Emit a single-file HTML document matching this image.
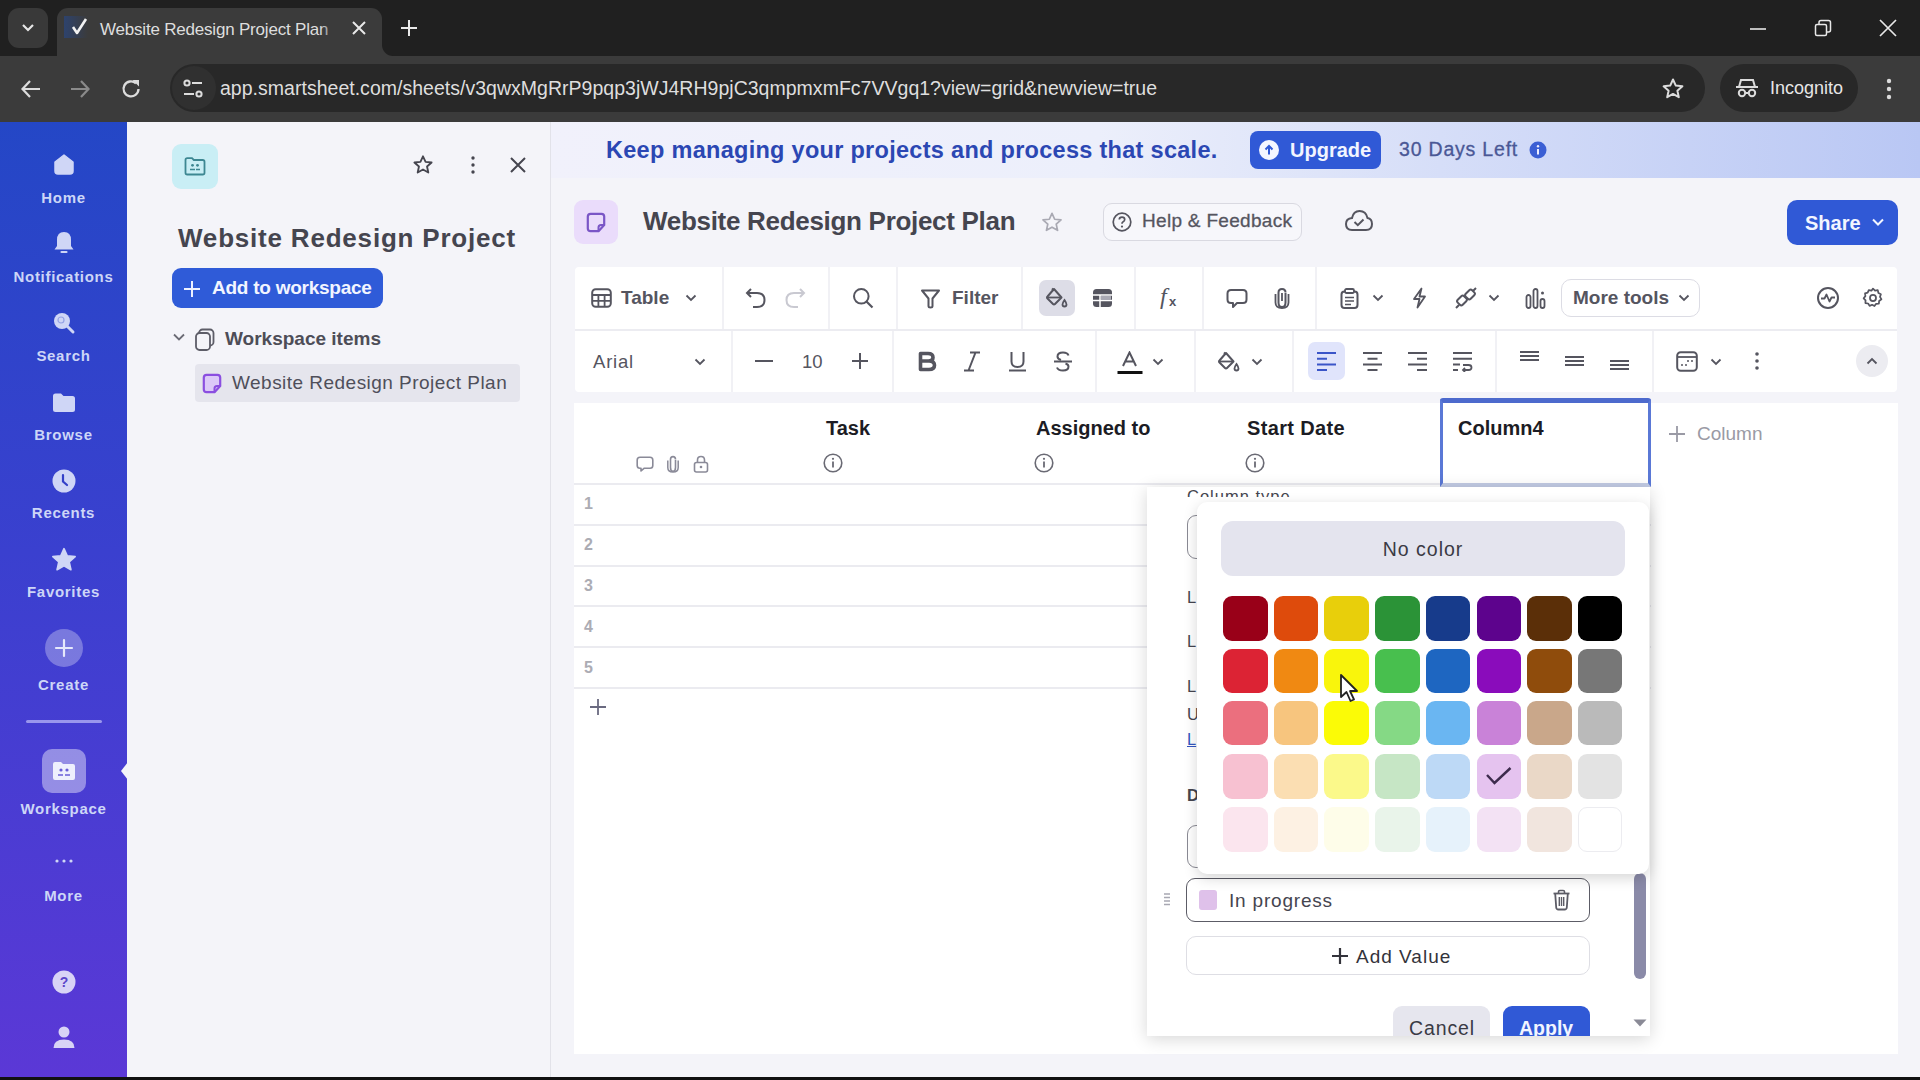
<!DOCTYPE html>
<html><head><meta charset="utf-8">
<style>
*{box-sizing:border-box;margin:0;padding:0}
html,body{width:1920px;height:1080px;overflow:hidden;font-family:"Liberation Sans",sans-serif;background:#f4f4f9}
.abs{position:absolute}
svg{display:block}
/* chrome */
#tabbar{position:absolute;left:0;top:0;width:1920px;height:56px;background:#202020}
#toolbar{position:absolute;left:0;top:56px;width:1920px;height:66px;background:#3b3b3b}
#sidebar{position:absolute;left:0;top:122px;width:127px;height:955px;background:linear-gradient(180deg,#2447c6 0%,#3a40cf 45%,#5b38d6 100%)}
#bottomline{position:absolute;left:0;top:1077px;width:1920px;height:3px;background:#111}
#lpanel{position:absolute;left:127px;top:122px;width:423px;height:955px;background:#f4f4f9}
#main{position:absolute;left:550px;top:122px;width:1370px;height:954px;background:#f4f4f9}
.sb-item{position:absolute;left:0;width:127px;text-align:center;color:#cdd6f7;font-weight:bold;font-size:15px;letter-spacing:0.7px}
</style></head>
<body>

<div id="tabbar">
  <div class="abs" style="left:8px;top:8px;width:40px;height:40px;border-radius:11px;background:#393939"></div>
  <svg class="abs" style="left:19px;top:20px" width="18" height="16" viewBox="0 0 18 16"><path d="M4 5 L9 10 L14 5" stroke="#e6e6e6" stroke-width="2.2" fill="none"/></svg>
  <div class="abs" style="left:57px;top:8px;width:325px;height:48px;border-radius:11px 11px 0 0;background:#3b3b3b"></div>
  <div class="abs" style="left:382px;top:44px;width:10px;height:12px;background:#3b3b3b"></div>
  <div class="abs" style="left:382px;top:34px;width:20px;height:22px;border-radius:0 0 0 11px;background:#202020"></div>
  <div class="abs" style="left:64px;top:16px;width:24px;height:22px;background:linear-gradient(90deg,rgba(40,70,130,0.7),rgba(59,59,59,0))"></div>
  <svg class="abs" style="left:70px;top:17px" width="20" height="20" viewBox="0 0 20 20"><path d="M3 10 L7 16 L16 2" stroke="#f2f2f2" stroke-width="2.6" fill="none" stroke-linejoin="round"/></svg>
  <div class="abs" style="left:100px;top:19.5px;font-size:17px;color:#dedede;white-space:nowrap;letter-spacing:-0.2px">Website Redesign Project Plan</div>
  <div class="abs" style="left:320px;top:14px;width:20px;height:30px;background:linear-gradient(90deg,rgba(59,59,59,0),#3b3b3b)"></div>
  <svg class="abs" style="left:351px;top:20px" width="16" height="16" viewBox="0 0 16 16"><path d="M2 2 L14 14 M14 2 L2 14" stroke="#e8e8e8" stroke-width="2"/></svg>
  <svg class="abs" style="left:400px;top:19px" width="18" height="18" viewBox="0 0 18 18"><path d="M9 1 V17 M1 9 H17" stroke="#e8e8e8" stroke-width="2"/></svg>
  <svg class="abs" style="left:1749px;top:27px" width="18" height="4" viewBox="0 0 18 4"><path d="M1 2 H17" stroke="#e8e8e8" stroke-width="1.6"/></svg>
  <svg class="abs" style="left:1814px;top:19px" width="18" height="18" viewBox="0 0 18 18"><rect x="1.5" y="5.5" width="11" height="11" rx="1.5" stroke="#e8e8e8" stroke-width="1.5" fill="none"/><path d="M5 5.5 V3.5 Q5 1.5 7 1.5 H14.5 Q16.5 1.5 16.5 3.5 V11 Q16.5 13 14.5 13 H12.5" stroke="#e8e8e8" stroke-width="1.5" fill="none"/></svg>
  <svg class="abs" style="left:1878px;top:18px" width="20" height="20" viewBox="0 0 20 20"><path d="M2 2 L18 18 M18 2 L2 18" stroke="#e8e8e8" stroke-width="1.7"/></svg>
</div>
<div id="toolbar">
  <svg class="abs" style="left:20px;top:22px" width="22" height="22" viewBox="0 0 22 22"><path d="M20 11 H3 M10 3 L2.5 11 L10 19" stroke="#dcdcdc" stroke-width="2.2" fill="none"/></svg>
  <svg class="abs" style="left:69px;top:22px" width="22" height="22" viewBox="0 0 22 22"><path d="M2 11 H19 M12 3 L19.5 11 L12 19" stroke="#8a8a8a" stroke-width="2.2" fill="none"/></svg>
  <svg class="abs" style="left:120px;top:22px" width="22" height="22" viewBox="0 0 22 22"><path d="M18.5 11 A7.5 7.5 0 1 1 16 5.3" stroke="#dcdcdc" stroke-width="2.3" fill="none"/><path d="M12.5 2 H19 V8.5 Z" fill="#dcdcdc"/></svg>
  <div class="abs" style="left:170px;top:8px;width:1535px;height:48px;border-radius:24px;background:#282828"></div>
  <div class="abs" style="left:172px;top:10px;width:44px;height:44px;border-radius:22px;background:#303030"></div>
  <svg class="abs" style="left:182px;top:22px" width="22" height="22" viewBox="0 0 22 22"><circle cx="5" cy="5" r="2.6" stroke="#dcdcdc" stroke-width="2" fill="none"/><path d="M10 5 H20 M2 16 H12" stroke="#dcdcdc" stroke-width="2"/><circle cx="17" cy="16" r="2.6" stroke="#dcdcdc" stroke-width="2" fill="none"/></svg>
  <div class="abs" style="left:220px;top:21px;font-size:19.5px;color:#dedede;white-space:nowrap;letter-spacing:0.02px">app.smartsheet.com/sheets/v3qwxMgRrP9pqp3jWJ4RH9pjC3qmpmxmFc7VVgq1?view=grid&amp;newview=true</div>
  <svg class="abs" style="left:1661px;top:21px" width="24" height="24" viewBox="0 0 24 24"><path d="M12 2.5 L14.8 8.6 L21.4 9.3 L16.4 13.7 L17.8 20.2 L12 16.9 L6.2 20.2 L7.6 13.7 L2.6 9.3 L9.2 8.6 Z" stroke="#dcdcdc" stroke-width="2" fill="none" stroke-linejoin="round"/></svg>
  <div class="abs" style="left:1720px;top:8px;width:138px;height:48px;border-radius:24px;background:#282828"></div>
  <svg class="abs" style="left:1735px;top:21px" width="24" height="22" viewBox="0 0 24 22"><path d="M6 3 H18 L20 10 H4 Z" stroke="#dcdcdc" stroke-width="2" fill="none"/><path d="M1 10 H23" stroke="#dcdcdc" stroke-width="2"/><circle cx="7" cy="16" r="3.2" stroke="#dcdcdc" stroke-width="2" fill="none"/><circle cx="17" cy="16" r="3.2" stroke="#dcdcdc" stroke-width="2" fill="none"/><path d="M10 16 H14" stroke="#dcdcdc" stroke-width="2"/></svg>
  <div class="abs" style="left:1770px;top:22px;font-size:18px;color:#e6e6e6">Incognito</div>
  <svg class="abs" style="left:1885px;top:21px" width="8" height="24" viewBox="0 0 8 24"><circle cx="4" cy="4" r="2.2" fill="#dcdcdc"/><circle cx="4" cy="12" r="2.2" fill="#dcdcdc"/><circle cx="4" cy="20" r="2.2" fill="#dcdcdc"/></svg>
</div>


<div id="sidebar">
  <svg class="abs" style="left:53px;top:31px" width="22" height="22" viewBox="0 0 22 22"><path d="M2 9 L11 2 L20 9 V18 Q20 21 17 21 H5 Q2 21 2 18 Z" fill="#cfd6f6" stroke="#cfd6f6" stroke-width="1.5" stroke-linejoin="round"/></svg>
  <div class="sb-item" style="top:67px">Home</div>
  <svg class="abs" style="left:52px;top:108px" width="24" height="26" viewBox="0 0 24 26"><path d="M12 2 Q5 2 5 10 V16 L2.5 19.5 H21.5 L19 16 V10 Q19 2 12 2 Z" fill="#cfd6f6"/><path d="M9.5 22 H14.5" stroke="#cfd6f6" stroke-width="2.2" stroke-linecap="round"/></svg>
  <div class="sb-item" style="top:146px">Notifications</div>
  <svg class="abs" style="left:52px;top:189px" width="24" height="24" viewBox="0 0 24 24"><circle cx="10" cy="10" r="8" fill="#cfd6f6"/><path d="M15 15 L21 21" stroke="#cfd6f6" stroke-width="3" stroke-linecap="round"/><circle cx="9" cy="9" r="3" fill="none" stroke="#2a45c6" stroke-opacity="0.35" stroke-width="1.2"/></svg>
  <div class="sb-item" style="top:225px">Search</div>
  <svg class="abs" style="left:52px;top:270px" width="24" height="22" viewBox="0 0 24 22"><path d="M1 4 Q1 1.5 3.5 1.5 H9 L11.5 4 H20.5 Q23 4 23 6.5 V17.5 Q23 20 20.5 20 H3.5 Q1 20 1 17.5 Z" fill="#cfd6f6"/></svg>
  <div class="sb-item" style="top:304px">Browse</div>
  <svg class="abs" style="left:52px;top:347px" width="24" height="24" viewBox="0 0 24 24"><circle cx="12" cy="12" r="11.5" fill="#cfd6f6"/><path d="M11 6 V12.5 L15 16" stroke="#3340c8" stroke-width="2.2" fill="none" stroke-linecap="round"/></svg>
  <div class="sb-item" style="top:382px">Recents</div>
  <svg class="abs" style="left:51px;top:425px" width="26" height="26" viewBox="0 0 24 24"><path d="M12 1.5 L15 8.2 L22.3 8.9 L16.8 13.8 L18.4 21 L12 17.3 L5.6 21 L7.2 13.8 L1.7 8.9 L9 8.2 Z" fill="#cfd6f6" stroke="#cfd6f6" stroke-width="1.5" stroke-linejoin="round"/></svg>
  <div class="sb-item" style="top:461px">Favorites</div>
  <div class="abs" style="left:45px;top:507px;width:38px;height:38px;border-radius:19px;background:rgba(255,255,255,0.3)"></div>
  <svg class="abs" style="left:54px;top:516px" width="20" height="20" viewBox="0 0 20 20"><path d="M10 2 V18 M2 10 H18" stroke="#e6e8fb" stroke-width="2.2" stroke-linecap="round"/></svg>
  <div class="sb-item" style="top:554px">Create</div>
  <div class="abs" style="left:26px;top:598px;width:76px;height:3px;border-radius:2px;background:rgba(210,210,255,0.6)"></div>
  <div class="abs" style="left:42px;top:627px;width:44px;height:44px;border-radius:10px;background:rgba(255,255,255,0.42)"></div>
  <svg class="abs" style="left:52px;top:639px" width="24" height="20" viewBox="0 0 24 20"><path d="M1 3 Q1 1 3 1 H9 L11 3 H21 Q23 3 23 5 V17 Q23 19 21 19 H3 Q1 19 1 17 Z" fill="#eef0fd"/><circle cx="9" cy="9" r="1.6" fill="#6a5ed8"/><circle cx="15" cy="9" r="1.6" fill="#6a5ed8"/><path d="M6 14 H11 M13 14 H18" stroke="#6a5ed8" stroke-width="1.6"/></svg>
  <div class="sb-item" style="top:678px">Workspace</div>
  <svg class="abs" style="left:120px;top:640px" width="8" height="18" viewBox="0 0 8 18"><path d="M8 0 L1 9 L8 18 Z" fill="#f4f4f9"/></svg>
  <svg class="abs" style="left:54px;top:736px" width="20" height="6" viewBox="0 0 20 6"><circle cx="3" cy="3" r="1.6" fill="#cfd6f6"/><circle cx="10" cy="3" r="1.6" fill="#cfd6f6"/><circle cx="17" cy="3" r="1.6" fill="#cfd6f6"/></svg>
  <div class="sb-item" style="top:765px">More</div>
  <svg class="abs" style="left:52px;top:848px" width="24" height="24" viewBox="0 0 24 24"><circle cx="12" cy="12" r="11.5" fill="#d8d3f6"/><text x="12" y="17" text-anchor="middle" font-family="Liberation Sans" font-weight="bold" font-size="14" fill="#5b45c9">?</text></svg>
  <svg class="abs" style="left:52px;top:903px" width="24" height="26" viewBox="0 0 24 26"><circle cx="12" cy="7" r="5.5" fill="#d8d3f6"/><path d="M1.5 23 Q1.5 14.5 12 14.5 Q22.5 14.5 22.5 23 Z" fill="#d8d3f6"/></svg>
</div>


<div id="lpanel">
  <div class="abs" style="left:45px;top:22px;width:46px;height:45px;border-radius:9px;background:#c9eef5"></div>
  <svg class="abs" style="left:57px;top:35px" width="22" height="19" viewBox="0 0 22 19"><path d="M1.5 3 Q1.5 1.2 3.3 1.2 H8 L9.8 3 H18.7 Q20.5 3 20.5 4.8 V15.7 Q20.5 17.5 18.7 17.5 H3.3 Q1.5 17.5 1.5 15.7 Z" fill="none" stroke="#3d8792" stroke-width="1.8"/><circle cx="8.5" cy="8.3" r="1.4" fill="#3d8792"/><circle cx="13.5" cy="8.3" r="1.4" fill="#3d8792"/><path d="M6 12.5 H11 M12 12.5 H16" stroke="#3d8792" stroke-width="1.6"/></svg>
  <svg class="abs" style="left:285px;top:32px" width="22" height="22" viewBox="0 0 24 24"><path d="M12 2.5 L14.8 8.6 L21.4 9.3 L16.4 13.7 L17.8 20.2 L12 16.9 L6.2 20.2 L7.6 13.7 L2.6 9.3 L9.2 8.6 Z" stroke="#45454f" stroke-width="2" fill="none" stroke-linejoin="round"/></svg>
  <svg class="abs" style="left:343px;top:33px" width="6" height="20" viewBox="0 0 6 20"><circle cx="3" cy="3" r="1.7" fill="#45454f"/><circle cx="3" cy="10" r="1.7" fill="#45454f"/><circle cx="3" cy="17" r="1.7" fill="#45454f"/></svg>
  <svg class="abs" style="left:382px;top:34px" width="18" height="18" viewBox="0 0 18 18"><path d="M2 2 L16 16 M16 2 L2 16" stroke="#45454f" stroke-width="2"/></svg>
  <div class="abs" style="left:51px;top:101px;font-size:26px;font-weight:bold;color:#45454f;white-space:nowrap;letter-spacing:0.8px">Website Redesign Project</div>
  <div class="abs" style="left:45px;top:146px;width:211px;height:40px;border-radius:9px;background:#2f5bd8"></div>
  <svg class="abs" style="left:56px;top:158px" width="18" height="18" viewBox="0 0 18 18"><path d="M9 1 V17 M1 9 H17" stroke="#eef2ff" stroke-width="2"/></svg>
  <div class="abs" style="left:85px;top:155px;font-size:19px;font-weight:bold;color:#f2f5ff;white-space:nowrap;letter-spacing:-0.25px">Add to workspace</div>
  <svg class="abs" style="left:45px;top:210px" width="14" height="10" viewBox="0 0 14 10"><path d="M2 2.5 L7 7.5 L12 2.5" stroke="#6b6b75" stroke-width="1.8" fill="none"/></svg>
  <svg class="abs" style="left:67px;top:206px" width="22" height="24" viewBox="0 0 22 24"><rect x="5" y="1.5" width="14.5" height="16" rx="3.5" fill="none" stroke="#5d5d68" stroke-width="1.8"/><rect x="2" y="5" width="14" height="17" rx="3.5" fill="#f4f4f9" stroke="#5d5d68" stroke-width="1.8"/></svg>
  <div class="abs" style="left:98px;top:206px;font-size:19px;font-weight:bold;color:#4d4d57;white-space:nowrap">Workspace items</div>
  <div class="abs" style="left:68px;top:242px;width:325px;height:38px;border-radius:4px;background:#e5e5ed"></div>
  <svg class="abs" style="left:75px;top:251px" width="20" height="21" viewBox="0 0 20 21"><path d="M4.5 1.8 H15.5 Q18.2 1.8 18.2 4.5 V13 L12.5 19.2 H4.5 Q1.8 19.2 1.8 16.5 V4.5 Q1.8 1.8 4.5 1.8 Z" fill="#dcc9f8" stroke="#8b4fe0" stroke-width="2.2" stroke-linejoin="round"/><path d="M12.5 19.2 V15.5 Q12.5 13 15 13 H18.2" fill="none" stroke="#8b4fe0" stroke-width="2"/></svg>
  <div class="abs" style="left:105px;top:250px;font-size:19px;color:#4f4f5a;white-space:nowrap;letter-spacing:0.47px">Website Redesign Project Plan</div>
</div>


<div id="main">
  <div class="abs" style="left:0;top:0;width:1370px;height:56px;background:linear-gradient(90deg,#f1f1fb 0%,#eceffb 40%,#d6def8 65%,#b9c7f4 100%)"></div>
  <div class="abs" style="left:56px;top:136px;font-size:23.5px;font-weight:bold;color:#2b47b3;white-space:nowrap;top:15px;letter-spacing:0.29px">Keep managing your projects and process that scale.</div>
  <div class="abs" style="left:700px;top:9px;width:131px;height:38px;border-radius:8px;background:#3059d6"></div>
  <svg class="abs" style="left:708px;top:17px" width="22" height="22" viewBox="0 0 22 22"><circle cx="11" cy="11" r="10" fill="#f4f6ff"/><path d="M11 15.5 V7.5 M7.5 10.5 L11 7 L14.5 10.5" stroke="#3059d6" stroke-width="2" fill="none"/></svg>
  <div class="abs" style="left:740px;top:17px;font-size:20px;font-weight:bold;color:#f2f5ff;white-space:nowrap">Upgrade</div>
  <div class="abs" style="left:849px;top:16px;font-size:19.5px;color:#4a5896;white-space:nowrap;letter-spacing:0.8px;-webkit-text-stroke:0.3px #4a5896">30 Days Left</div>
  <svg class="abs" style="left:979px;top:19px" width="18" height="18" viewBox="0 0 18 18"><circle cx="9" cy="9" r="8.5" fill="#3b5fd4"/><path d="M9 8 V13.5" stroke="#eef" stroke-width="2"/><circle cx="9" cy="5.2" r="1.2" fill="#eef"/></svg>

  <div class="abs" style="left:24px;top:78px;width:44px;height:44px;border-radius:9px;background:#eadcfb"></div>
  <svg class="abs" style="left:36px;top:90px" width="20" height="21" viewBox="0 0 20 21"><path d="M4.5 1.8 H15.5 Q18.2 1.8 18.2 4.5 V13 L12.5 19.2 H4.5 Q1.8 19.2 1.8 16.5 V4.5 Q1.8 1.8 4.5 1.8 Z" fill="none" stroke="#7a56c6" stroke-width="2.2" stroke-linejoin="round"/><path d="M12.5 19.2 V15.5 Q12.5 13 15 13 H18.2" fill="none" stroke="#7a56c6" stroke-width="2"/></svg>
  <div class="abs" style="left:93px;top:84px;font-size:26px;font-weight:bold;color:#45454f;white-space:nowrap;letter-spacing:-0.3px">Website Redesign Project Plan</div>
  <svg class="abs" style="left:490px;top:89px" width="24" height="23" viewBox="0 0 24 24"><path d="M12 2.5 L14.8 8.6 L21.4 9.3 L16.4 13.7 L17.8 20.2 L12 16.9 L6.2 20.2 L7.6 13.7 L2.6 9.3 L9.2 8.6 Z" stroke="#a9a9b3" stroke-width="1.8" fill="none" stroke-linejoin="round"/></svg>
  <div class="abs" style="left:553px;top:81px;width:199px;height:38px;border-radius:9px;background:#f7f7fb;border:1px solid #d9d9e1"></div>
  <svg class="abs" style="left:562px;top:90px" width="20" height="20" viewBox="0 0 20 20"><circle cx="10" cy="10" r="8.8" fill="none" stroke="#55555f" stroke-width="1.7"/><path d="M7.3 7.6 Q7.3 5.2 10 5.2 Q12.7 5.2 12.7 7.6 Q12.7 9.2 10.9 10 Q10 10.5 10 11.8" fill="none" stroke="#55555f" stroke-width="1.7"/><circle cx="10" cy="14.6" r="1.1" fill="#55555f"/></svg>
  <div class="abs" style="left:592px;top:88px;font-size:19px;color:#55555f;white-space:nowrap;letter-spacing:0.3px;-webkit-text-stroke:0.3px #55555f">Help &amp; Feedback</div>
  <svg class="abs" style="left:794px;top:86px" width="30" height="26" viewBox="0 0 30 26"><path d="M8 22 Q2 22 2 16 Q2 10.5 8 10 Q9.5 3 15.5 3 Q22 3 23.5 10 Q28 10.8 28 16 Q28 22 22 22 Z" fill="none" stroke="#55555f" stroke-width="2"/><path d="M10.5 14 L13.8 17.2 L19.5 11.5" fill="none" stroke="#55555f" stroke-width="2"/></svg>
  <div class="abs" style="left:1237px;top:78px;width:111px;height:45px;border-radius:10px;background:#3059d6"></div>
  <div class="abs" style="left:1255px;top:90px;font-size:20px;font-weight:bold;color:#f2f5ff;white-space:nowrap">Share</div>
  <svg class="abs" style="left:1321px;top:95px" width="14" height="10" viewBox="0 0 14 10"><path d="M2 2.5 L7 7.5 L12 2.5" stroke="#f2f5ff" stroke-width="2" fill="none"/></svg>
</div>


<div id="tb">
  <div class="abs" style="left:575px;top:267px;width:1322px;height:125px;background:#fff;border-radius:4px"></div>
  <div class="abs" style="left:575px;top:329px;width:1322px;height:2px;background:#ececf1"></div>
  <div class="abs" style="left:722px;top:267px;width:2px;height:62px;background:#f1f1f5"></div>
  <div class="abs" style="left:828px;top:267px;width:2px;height:62px;background:#f1f1f5"></div>
  <div class="abs" style="left:896px;top:267px;width:2px;height:62px;background:#f1f1f5"></div>
  <div class="abs" style="left:1021px;top:267px;width:2px;height:62px;background:#f1f1f5"></div>
  <div class="abs" style="left:1134px;top:267px;width:2px;height:62px;background:#f1f1f5"></div>
  <div class="abs" style="left:1202px;top:267px;width:2px;height:62px;background:#f1f1f5"></div>
  <div class="abs" style="left:1315px;top:267px;width:2px;height:62px;background:#f1f1f5"></div>
  <div class="abs" style="left:731px;top:331px;width:2px;height:61px;background:#f1f1f5"></div>
  <div class="abs" style="left:892px;top:331px;width:2px;height:61px;background:#f1f1f5"></div>
  <div class="abs" style="left:1095px;top:331px;width:2px;height:61px;background:#f1f1f5"></div>
  <div class="abs" style="left:1194px;top:331px;width:2px;height:61px;background:#f1f1f5"></div>
  <div class="abs" style="left:1292px;top:331px;width:2px;height:61px;background:#f1f1f5"></div>
  <div class="abs" style="left:1495px;top:331px;width:2px;height:61px;background:#f1f1f5"></div>
  <div class="abs" style="left:1652px;top:331px;width:2px;height:61px;background:#f1f1f5"></div>

  <svg class="abs" style="left:591px;top:288px" width="21" height="20" viewBox="0 0 21 20"><rect x="1.2" y="1.2" width="18.6" height="17.6" rx="3.5" fill="none" stroke="#55555f" stroke-width="2"/><path d="M1.2 7 H19.8 M1.2 12.8 H19.8 M7.4 7 V18.8 M13.6 7 V18.8" stroke="#55555f" stroke-width="1.8"/></svg>
  <div class="abs" style="left:621px;top:287px;font-size:19px;font-weight:bold;color:#55555f;white-space:nowrap">Table</div>
  <svg class="abs" style="left:685px;top:294px" width="12" height="8" viewBox="0 0 12 8"><path d="M1.5 1.5 L6 6 L10.5 1.5" stroke="#55555f" stroke-width="1.8" fill="none"/></svg>
  <svg class="abs" style="left:745px;top:287px" width="22" height="22" viewBox="0 0 22 22"><path d="M6 2 L2 6 L6 10" fill="none" stroke="#55555f" stroke-width="2"/><path d="M2 6 H12 Q19.5 6 19.5 13 Q19.5 20 12 20 H8" fill="none" stroke="#55555f" stroke-width="2"/></svg>
  <svg class="abs" style="left:784px;top:287px" width="22" height="22" viewBox="0 0 22 22"><path d="M16 2 L20 6 L16 10" fill="none" stroke="#c9c9d1" stroke-width="2"/><path d="M20 6 H10 Q2.5 6 2.5 13 Q2.5 20 10 20 H14" fill="none" stroke="#c9c9d1" stroke-width="2"/></svg>
  <svg class="abs" style="left:852px;top:287px" width="22" height="22" viewBox="0 0 22 22"><circle cx="9.3" cy="9.3" r="7.3" fill="none" stroke="#55555f" stroke-width="2"/><path d="M14.5 14.5 L20.5 20.5" stroke="#55555f" stroke-width="2.2"/></svg>
  <svg class="abs" style="left:920px;top:288px" width="21" height="21" viewBox="0 0 21 21"><path d="M2 2.5 H19 L12.5 10.5 V18 Q12.5 19.5 10.5 19.5 Q8.5 19.5 8.5 18 V10.5 Z" fill="none" stroke="#55555f" stroke-width="2" stroke-linejoin="round"/></svg>
  <div class="abs" style="left:952px;top:287px;font-size:19px;font-weight:bold;color:#55555f;white-space:nowrap">Filter</div>
  <div class="abs" style="left:1039px;top:280px;width:36px;height:36px;border-radius:7px;background:#dddde7"></div>
  <svg class="abs" style="left:1045px;top:287px" width="24" height="22" viewBox="0 0 24 22"><path d="M9 2 L2.5 9.5 Q1.5 10.5 2.5 11.5 L8 17 Q9 18 10 17 L16.5 10.5 Z" fill="none" stroke="#55555f" stroke-width="2" stroke-linejoin="round"/><path d="M3 10.5 H16" stroke="#55555f" stroke-width="1.8"/><path d="M7 1.5 L9 3.5" stroke="#55555f" stroke-width="2"/><path d="M19.5 13 Q17.5 16 17.5 17.5 Q17.5 19.5 19.5 19.5 Q21.5 19.5 21.5 17.5 Q21.5 16 19.5 13 Z" fill="none" stroke="#55555f" stroke-width="1.8"/></svg>
  <svg class="abs" style="left:1092px;top:288px" width="21" height="20" viewBox="0 0 21 20"><rect x="1" y="1" width="19" height="18" rx="3.5" fill="#55555f"/><path d="M1 7 H20 M1 12.5 H20 M8 7 V19" stroke="#fff" stroke-width="1.5"/><rect x="9" y="8" width="10" height="4" fill="#a9a9b3"/></svg>
  <div class="abs" style="left:1160px;top:283px;font-size:24px;font-style:italic;font-family:'Liberation Serif',serif;color:#55555f">f</div>
  <div class="abs" style="left:1169px;top:294px;font-size:13px;font-weight:bold;color:#55555f">x</div>
  <svg class="abs" style="left:1226px;top:288px" width="22" height="21" viewBox="0 0 22 21"><path d="M5 2 H17 Q20.5 2 20.5 5.5 V11.5 Q20.5 15 17 15 H11 L7 19 V15 H5 Q1.5 15 1.5 11.5 V5.5 Q1.5 2 5 2 Z" fill="none" stroke="#55555f" stroke-width="2" stroke-linejoin="round"/></svg>
  <svg class="abs" style="left:1274px;top:287px" width="16" height="22" viewBox="0 0 16 22"><path d="M11.5 6 V15.5 Q11.5 20 8 20 Q4.5 20 4.5 15.5 V5.5 Q4.5 2 8 2 Q11.5 2 11.5 5.5" fill="none" stroke="#55555f" stroke-width="2"/><path d="M8 6 V14" stroke="#55555f" stroke-width="1.8"/><path d="M1.5 7 V15.5 Q1.5 21 8 21 Q14.5 21 14.5 15.5 V7" fill="none" stroke="#55555f" stroke-width="1.8"/></svg>
  <svg class="abs" style="left:1340px;top:288px" width="19" height="21" viewBox="0 0 19 21"><rect x="1.5" y="3.5" width="16" height="16.5" rx="3" fill="none" stroke="#55555f" stroke-width="2"/><rect x="5" y="1" width="9" height="4" rx="1.5" fill="#fff" stroke="#55555f" stroke-width="1.8"/><path d="M5 9.5 H14 M5 13 H14 M5 16.5 H11" stroke="#55555f" stroke-width="1.6"/></svg>
  <svg class="abs" style="left:1372px;top:294px" width="12" height="8" viewBox="0 0 12 8"><path d="M1.5 1.5 L6 6 L10.5 1.5" stroke="#55555f" stroke-width="1.8" fill="none"/></svg>
  <svg class="abs" style="left:1412px;top:287px" width="15" height="22" viewBox="0 0 15 22"><path d="M9.5 1.5 L2 12 H7.5 L5.5 20.5 L13 9.5 H7.5 Z" fill="none" stroke="#55555f" stroke-width="1.8" stroke-linejoin="round"/></svg>
  <svg class="abs" style="left:1455px;top:287px" width="22" height="22" viewBox="0 0 22 22"><rect x="2.5" y="10" width="9" height="7" rx="2" transform="rotate(-45 7 13.5)" fill="none" stroke="#55555f" stroke-width="2"/><rect x="10.5" y="4" width="9" height="7" rx="2" transform="rotate(-45 15 7.5)" fill="none" stroke="#55555f" stroke-width="2"/><path d="M1 21 L4 18 M18 4 L21 1" stroke="#55555f" stroke-width="2"/></svg>
  <svg class="abs" style="left:1488px;top:294px" width="12" height="8" viewBox="0 0 12 8"><path d="M1.5 1.5 L6 6 L10.5 1.5" stroke="#55555f" stroke-width="1.8" fill="none"/></svg>
  <svg class="abs" style="left:1525px;top:287px" width="21" height="22" viewBox="0 0 21 22"><rect x="1.5" y="8" width="4" height="13" rx="2" fill="none" stroke="#55555f" stroke-width="1.8"/><rect x="8.5" y="2" width="4" height="19" rx="2" fill="none" stroke="#55555f" stroke-width="1.8"/><rect x="15.5" y="12" width="4" height="9" rx="2" fill="none" stroke="#55555f" stroke-width="1.8"/><circle cx="17.5" cy="6" r="1.5" fill="#55555f"/></svg>
  <div class="abs" style="left:1561px;top:279px;width:139px;height:38px;border-radius:10px;border:1.5px solid #dcdce4;background:#fff"></div>
  <div class="abs" style="left:1573px;top:287px;font-size:19px;font-weight:bold;color:#55555f;white-space:nowrap">More tools</div>
  <svg class="abs" style="left:1678px;top:294px" width="12" height="8" viewBox="0 0 12 8"><path d="M1.5 1.5 L6 6 L10.5 1.5" stroke="#55555f" stroke-width="1.8" fill="none"/></svg>
  <svg class="abs" style="left:1816px;top:286px" width="24" height="24" viewBox="0 0 24 24"><circle cx="12" cy="12" r="10" fill="none" stroke="#55555f" stroke-width="2"/><path d="M5 12.5 H8.5 L10.5 8.5 L13.5 15.5 L15.5 11.5 H19" fill="none" stroke="#55555f" stroke-width="1.8" stroke-linejoin="round"/></svg>
  <svg class="abs" style="left:1862px;top:287px" width="22" height="22" viewBox="0 0 24 24"><path d="M12 1.8 L14.2 3.9 L17.2 3.5 L17.9 6.5 L20.6 7.9 L19.6 10.8 L21.2 13.4 L18.7 15.2 L18.4 18.2 L15.4 18.3 L13.6 20.8 L11 19.4 L8.3 20.6 L6.7 18 L3.7 17.5 L3.9 14.5 L1.8 12.3 L3.7 10 L3.3 7 L6.2 6.2 L7.4 3.4 L10.3 4 Z" fill="none" stroke="#55555f" stroke-width="1.9" stroke-linejoin="round"/><circle cx="12" cy="12" r="3.3" fill="none" stroke="#55555f" stroke-width="1.9"/></svg>

  <div class="abs" style="left:593px;top:351px;font-size:18.5px;color:#55555f;white-space:nowrap;letter-spacing:0.8px">Arial</div>
  <svg class="abs" style="left:694px;top:358px" width="12" height="8" viewBox="0 0 12 8"><path d="M1.5 1.5 L6 6 L10.5 1.5" stroke="#55555f" stroke-width="1.8" fill="none"/></svg>
  <div class="abs" style="left:755px;top:360px;width:18px;height:2px;background:#55555f"></div>
  <div class="abs" style="left:802px;top:351px;font-size:18.5px;color:#55555f;white-space:nowrap">10</div>
  <svg class="abs" style="left:851px;top:352px" width="18" height="18" viewBox="0 0 18 18"><path d="M9 1 V17 M1 9 H17" stroke="#55555f" stroke-width="2"/></svg>
  <svg class="abs" style="left:918px;top:351px" width="19" height="21" viewBox="0 0 19 21"><path d="M2.5 2.5 H10 Q15 2.5 15 6.5 Q15 10 10.5 10 H2.5 Z M2.5 10 H11 Q16.5 10 16.5 14.3 Q16.5 18.5 11 18.5 H2.5 Z" fill="none" stroke="#55555f" stroke-width="3.6" stroke-linejoin="round"/></svg>
  <svg class="abs" style="left:962px;top:351px" width="20" height="21" viewBox="0 0 20 21"><path d="M8 1.5 H18 M2 19.5 H12 M13.5 1.5 L6.5 19.5" stroke="#55555f" stroke-width="2" fill="none"/></svg>
  <svg class="abs" style="left:1008px;top:351px" width="19" height="21" viewBox="0 0 19 21"><path d="M3.5 1 V10.5 Q3.5 16 9.5 16 Q15.5 16 15.5 10.5 V1" fill="none" stroke="#55555f" stroke-width="2"/><path d="M1 19.5 H18" stroke="#55555f" stroke-width="2"/></svg>
  <svg class="abs" style="left:1053px;top:351px" width="20" height="21" viewBox="0 0 20 21"><path d="M15.5 4.5 Q14.5 1.5 10 1.5 Q4.5 1.5 4.5 5.5 Q4.5 8 8 9" fill="none" stroke="#55555f" stroke-width="2"/><path d="M1 10.5 H19" stroke="#55555f" stroke-width="2"/><path d="M12.5 12.5 Q15.5 13.5 15.5 15.5 Q15.5 19.5 10 19.5 Q5 19.5 4 16.5" fill="none" stroke="#55555f" stroke-width="2"/></svg>
  <svg class="abs" style="left:1117px;top:351px" width="26" height="24" viewBox="0 0 26 24"><path d="M6 15 L12.5 1.5 L19 15 M8.2 10.5 H16.8" fill="none" stroke="#55555f" stroke-width="2"/><rect x="0.5" y="20" width="25" height="3" fill="#111"/></svg>
  <svg class="abs" style="left:1152px;top:358px" width="12" height="8" viewBox="0 0 12 8"><path d="M1.5 1.5 L6 6 L10.5 1.5" stroke="#55555f" stroke-width="1.8" fill="none"/></svg>
  <svg class="abs" style="left:1217px;top:351px" width="24" height="22" viewBox="0 0 24 22"><path d="M9 2 L2.5 9.5 Q1.5 10.5 2.5 11.5 L8 17 Q9 18 10 17 L16.5 10.5 Z" fill="none" stroke="#55555f" stroke-width="2" stroke-linejoin="round"/><path d="M3 10.5 H16" stroke="#55555f" stroke-width="1.8"/><path d="M7 1.5 L9 3.5" stroke="#55555f" stroke-width="2"/><path d="M19.5 13 Q17.5 16 17.5 17.5 Q17.5 19.5 19.5 19.5 Q21.5 19.5 21.5 17.5 Q21.5 16 19.5 13 Z" fill="none" stroke="#55555f" stroke-width="1.8"/></svg>
  <svg class="abs" style="left:1251px;top:358px" width="12" height="8" viewBox="0 0 12 8"><path d="M1.5 1.5 L6 6 L10.5 1.5" stroke="#55555f" stroke-width="1.8" fill="none"/></svg>
  <div class="abs" style="left:1308px;top:342px;width:37px;height:38px;border-radius:7px;background:#e0e4fb"></div>
  <svg class="abs" style="left:1316px;top:351px" width="21" height="21" viewBox="0 0 21 21"><path d="M1 2 H20 M1 7.7 H11 M1 13.4 H20 M1 19 H11" stroke="#3a55c8" stroke-width="2"/></svg>
  <svg class="abs" style="left:1362px;top:351px" width="21" height="21" viewBox="0 0 21 21"><path d="M1 2 H20 M5.5 7.7 H15.5 M1 13.4 H20 M5.5 19 H15.5" stroke="#55555f" stroke-width="2"/></svg>
  <svg class="abs" style="left:1407px;top:351px" width="21" height="21" viewBox="0 0 21 21"><path d="M1 2 H20 M10 7.7 H20 M1 13.4 H20 M10 19 H20" stroke="#55555f" stroke-width="2"/></svg>
  <svg class="abs" style="left:1452px;top:351px" width="21" height="21" viewBox="0 0 21 21"><path d="M1 2 H20 M1 7.7 H20 M1 13.4 H8 M1 19 H6" stroke="#55555f" stroke-width="2"/><path d="M11 14 H16.5 Q19.5 14 19.5 16.5 Q19.5 19 16.5 19 H11 M13 17 L11 19 L13 21" fill="none" stroke="#55555f" stroke-width="1.8"/></svg>
  <svg class="abs" style="left:1519px;top:350px" width="21" height="12" viewBox="0 0 21 12"><path d="M1 2 H20 M1 6 H20 M1 10 H20" stroke="#55555f" stroke-width="2"/></svg>
  <svg class="abs" style="left:1564px;top:355px" width="21" height="12" viewBox="0 0 21 12"><path d="M1 2 H20 M1 6 H20 M1 10 H20" stroke="#55555f" stroke-width="2"/></svg>
  <svg class="abs" style="left:1609px;top:359px" width="21" height="12" viewBox="0 0 21 12"><path d="M1 2 H20 M1 6 H20 M1 10 H20" stroke="#55555f" stroke-width="2"/></svg>
  <svg class="abs" style="left:1676px;top:351px" width="22" height="21" viewBox="0 0 22 21"><rect x="1.2" y="1.2" width="19.6" height="18.6" rx="3.5" fill="none" stroke="#55555f" stroke-width="2"/><path d="M1.2 6 H20.8" stroke="#55555f" stroke-width="1.8"/><path d="M11 10 H13 M15 10 H17 M5 14 H7 M9 14 H11" stroke="#55555f" stroke-width="1.5"/></svg>
  <svg class="abs" style="left:1710px;top:358px" width="12" height="8" viewBox="0 0 12 8"><path d="M1.5 1.5 L6 6 L10.5 1.5" stroke="#55555f" stroke-width="1.8" fill="none"/></svg>
  <svg class="abs" style="left:1754px;top:351px" width="6" height="20" viewBox="0 0 6 20"><circle cx="3" cy="3" r="1.8" fill="#55555f"/><circle cx="3" cy="10" r="1.8" fill="#55555f"/><circle cx="3" cy="17" r="1.8" fill="#55555f"/></svg>
  <div class="abs" style="left:1856px;top:345px;width:32px;height:32px;border-radius:16px;background:#ececf1"></div>
  <svg class="abs" style="left:1866px;top:357px" width="12" height="8" viewBox="0 0 12 8"><path d="M1.5 6.5 L6 2 L10.5 6.5" stroke="#55555f" stroke-width="1.8" fill="none"/></svg>
</div>

<div id="grid">
  <div class="abs" style="left:574px;top:403px;width:1324px;height:651px;background:#fff"></div>
  <div class="abs" style="left:574px;top:483px;width:867px;height:1.5px;background:#ebebf0"></div>
<div class="abs" style="left:574px;top:524px;width:1077px;height:1.5px;background:#ebebf0"></div>
<div class="abs" style="left:574px;top:565px;width:1077px;height:1.5px;background:#ebebf0"></div>
<div class="abs" style="left:574px;top:605px;width:1077px;height:1.5px;background:#ebebf0"></div>
<div class="abs" style="left:574px;top:646px;width:1077px;height:1.5px;background:#ebebf0"></div>
<div class="abs" style="left:574px;top:687px;width:1077px;height:1.5px;background:#ebebf0"></div>

  <div class="abs" style="left:584px;top:495px;font-size:16px;font-weight:bold;color:#acacb4">1</div>
<div class="abs" style="left:584px;top:536px;font-size:16px;font-weight:bold;color:#acacb4">2</div>
<div class="abs" style="left:584px;top:577px;font-size:16px;font-weight:bold;color:#acacb4">3</div>
<div class="abs" style="left:584px;top:618px;font-size:16px;font-weight:bold;color:#acacb4">4</div>
<div class="abs" style="left:584px;top:659px;font-size:16px;font-weight:bold;color:#acacb4">5</div>

  <svg class="abs" style="left:589px;top:698px" width="18" height="18" viewBox="0 0 18 18"><path d="M9 1 V17 M1 9 H17" stroke="#6a6a80" stroke-width="1.8"/></svg>
  <svg class="abs" style="left:636px;top:456px" width="18" height="16" viewBox="0 0 18 16"><path d="M4 1.2 H14 Q16.8 1.2 16.8 4 V9.5 Q16.8 12.3 14 12.3 H8 L5 15 V12.3 H4 Q1.2 12.3 1.2 9.5 V4 Q1.2 1.2 4 1.2 Z" fill="none" stroke="#8a8a98" stroke-width="1.6" stroke-linejoin="round"/></svg>
  <svg class="abs" style="left:666px;top:455px" width="14" height="18" viewBox="0 0 14 18"><path d="M9.5 5 V12.5 Q9.5 16.2 7 16.2 Q4.5 16.2 4.5 12.5 V4.5 Q4.5 1.6 7 1.6 Q9.5 1.6 9.5 4.5" fill="none" stroke="#8a8a98" stroke-width="1.6"/><path d="M1.8 5.5 V12.5 Q1.8 17 7 17 Q12.2 17 12.2 12.5 V5.5" fill="none" stroke="#8a8a98" stroke-width="1.5"/></svg>
  <svg class="abs" style="left:693px;top:455px" width="16" height="18" viewBox="0 0 16 18"><rect x="1.5" y="7.5" width="13" height="9.5" rx="2" fill="none" stroke="#8a8a98" stroke-width="1.6"/><path d="M4.5 7.5 V5 Q4.5 1.5 8 1.5 Q11.5 1.5 11.5 5 V7.5" fill="none" stroke="#8a8a98" stroke-width="1.6"/><circle cx="8" cy="12" r="1.3" fill="#8a8a98"/></svg>
  <div class="abs" style="left:826px;top:417px;font-size:20px;font-weight:bold;color:#1c1c24;white-space:nowrap">Task</div>
  <svg class="abs" style="left:823px;top:453px" width="20" height="20" viewBox="0 0 20 20"><circle cx="10" cy="10" r="8.8" fill="none" stroke="#6a6a74" stroke-width="1.6"/><path d="M10 8.5 V14.5" stroke="#6a6a74" stroke-width="1.8"/><circle cx="10" cy="5.8" r="1.1" fill="#6a6a74"/></svg>
  <div class="abs" style="left:1036px;top:417px;font-size:20px;font-weight:bold;color:#1c1c24;white-space:nowrap">Assigned to</div>
  <svg class="abs" style="left:1034px;top:453px" width="20" height="20" viewBox="0 0 20 20"><circle cx="10" cy="10" r="8.8" fill="none" stroke="#6a6a74" stroke-width="1.6"/><path d="M10 8.5 V14.5" stroke="#6a6a74" stroke-width="1.8"/><circle cx="10" cy="5.8" r="1.1" fill="#6a6a74"/></svg>
  <div class="abs" style="left:1247px;top:417px;font-size:20px;font-weight:bold;color:#1c1c24;white-space:nowrap;letter-spacing:0.35px">Start Date</div>
  <svg class="abs" style="left:1245px;top:453px" width="20" height="20" viewBox="0 0 20 20"><circle cx="10" cy="10" r="8.8" fill="none" stroke="#6a6a74" stroke-width="1.6"/><path d="M10 8.5 V14.5" stroke="#6a6a74" stroke-width="1.8"/><circle cx="10" cy="5.8" r="1.1" fill="#6a6a74"/></svg>
  <div class="abs" style="left:1440px;top:398px;width:211px;height:89px;border:3px solid #5a78d6;border-top:5px solid #4d6acd;border-bottom:4.5px solid #c2cbe4;border-radius:3px 3px 0 0;background:#fff"></div>
  <div class="abs" style="left:1458px;top:417px;font-size:20px;font-weight:bold;color:#1c1c24;white-space:nowrap">Column4</div>
  <svg class="abs" style="left:1668px;top:425px" width="18" height="18" viewBox="0 0 18 18"><path d="M9 1 V17 M1 9 H17" stroke="#9a9aa5" stroke-width="1.8"/></svg>
  <div class="abs" style="left:1697px;top:423px;font-size:19px;color:#9a9aa5;white-space:nowrap">Column</div>
</div>

<div id="popup">
  <div class="abs" style="left:1147px;top:487px;width:503px;height:549px;background:#fff;box-shadow:0 3px 16px rgba(0,0,0,0.16)"></div>
  <div class="abs" style="left:1147px;top:487px;width:293px;height:3px;background:#fff"></div>
  <div class="abs" style="left:1187px;top:487px;width:200px;height:10px;overflow:hidden"><div style="position:absolute;left:0;top:0px;font-size:16.5px;color:#45454f;white-space:nowrap;letter-spacing:1px">Column type</div></div>
  <div class="abs" style="left:1187px;top:515px;width:300px;height:44px;border:1.5px solid #8a8a94;border-radius:9px"></div>
  <div class="abs" style="left:1187px;top:588px;font-size:16.5px;color:#45454f">L</div>
  <div class="abs" style="left:1187px;top:632px;font-size:16.5px;color:#45454f">L</div>
  <div class="abs" style="left:1187px;top:677px;font-size:16.5px;color:#45454f">L</div>
  <div class="abs" style="left:1187px;top:705px;font-size:16.5px;color:#45454f">U</div>
  <div class="abs" style="left:1187px;top:730px;font-size:16.5px;color:#3355c0;text-decoration:underline">L</div>
  <div class="abs" style="left:1187px;top:786px;font-size:16.5px;font-weight:bold;color:#45454f">D</div>
  <div class="abs" style="left:1187px;top:825px;width:300px;height:43px;border:1.5px solid #8a8a94;border-radius:9px"></div>

  <div class="abs" style="left:1186px;top:878px;width:404px;height:44px;border:1.5px solid #5c5c66;border-radius:9px;background:#fff"></div>
  <div class="abs" style="left:1199px;top:890px;width:18px;height:20px;border-radius:3px;background:#dfc1ea"></div>
  <div class="abs" style="left:1229px;top:890px;font-size:19px;color:#45454f;white-space:nowrap;letter-spacing:0.8px">In progress</div>
  <svg class="abs" style="left:1552px;top:889px" width="19" height="22" viewBox="0 0 19 22"><path d="M1.5 4.5 H17.5" stroke="#5c5c66" stroke-width="1.8"/><path d="M6.5 4.5 V2.8 Q6.5 1.5 7.8 1.5 H11.2 Q12.5 1.5 12.5 2.8 V4.5" fill="none" stroke="#5c5c66" stroke-width="1.6"/><path d="M3.2 4.5 L4.2 18.5 Q4.4 20.5 6.4 20.5 H12.6 Q14.6 20.5 14.8 18.5 L15.8 4.5" fill="none" stroke="#5c5c66" stroke-width="1.8"/><path d="M7.3 8 V17 M9.5 8 V17 M11.7 8 V17" stroke="#5c5c66" stroke-width="1.4"/></svg>
  <svg class="abs" style="left:1163px;top:892px" width="8" height="15" viewBox="0 0 8 15"><path d="M1 2 H7 M1 5.5 H7 M1 9 H7 M1 12.5 H7" stroke="#a8a8b2" stroke-width="1.4"/></svg>
  <div class="abs" style="left:1186px;top:936px;width:404px;height:39px;border:1.5px solid #dedee4;border-radius:10px;background:#fff"></div>
  <svg class="abs" style="left:1331px;top:947px" width="18" height="18" viewBox="0 0 18 18"><path d="M9 1 V17 M1 9 H17" stroke="#33333b" stroke-width="2.2"/></svg>
  <div class="abs" style="left:1356px;top:946px;font-size:19px;color:#33333b;white-space:nowrap;letter-spacing:1px">Add Value</div>
  <div class="abs" style="left:1634px;top:873px;width:12px;height:106px;border-radius:6px;background:#8a8aa8"></div>
  <div class="abs" style="left:1393px;top:1006px;width:97px;height:30px;border-radius:9px 9px 0 0;background:#e6e6ee;overflow:hidden"><div style="position:absolute;left:16px;top:11px;font-size:19.5px;color:#3a3a44;letter-spacing:0.9px">Cancel</div></div>
  <div class="abs" style="left:1503px;top:1006px;width:87px;height:30px;border-radius:9px 9px 0 0;background:#3059d6;overflow:hidden"><div style="position:absolute;left:16px;top:11px;font-size:19.5px;font-weight:bold;color:#f2f5ff">Apply</div></div>
  <svg class="abs" style="left:1633px;top:1019px" width="14" height="8" viewBox="0 0 14 8"><path d="M0.5 0.5 H13.5 L7 7.5 Z" fill="#8a8a96"/></svg>

  <div class="abs" style="left:1197px;top:502px;width:452px;height:372px;background:#fff;border-radius:10px;box-shadow:0 4px 14px rgba(0,0,0,0.17)"></div>
  <div class="abs" style="left:1221px;top:521px;width:404px;height:55px;border-radius:12px;background:#e4e4ee"></div>
  <div class="abs" style="left:1221px;top:538px;width:404px;text-align:center;font-size:19.5px;color:#3a3a44;letter-spacing:1px">No color</div>
  <div class="abs" style="left:1223.0px;top:596px;width:44.5px;height:44.5px;border-radius:9px;background:#990018;"></div>
<div class="abs" style="left:1273.7px;top:596px;width:44.5px;height:44.5px;border-radius:9px;background:#de4b0c;"></div>
<div class="abs" style="left:1324.4px;top:596px;width:44.5px;height:44.5px;border-radius:9px;background:#e8cf0b;"></div>
<div class="abs" style="left:1375.1px;top:596px;width:44.5px;height:44.5px;border-radius:9px;background:#2b9337;"></div>
<div class="abs" style="left:1425.8px;top:596px;width:44.5px;height:44.5px;border-radius:9px;background:#173b8b;"></div>
<div class="abs" style="left:1476.5px;top:596px;width:44.5px;height:44.5px;border-radius:9px;background:#5d038d;"></div>
<div class="abs" style="left:1527.2px;top:596px;width:44.5px;height:44.5px;border-radius:9px;background:#5b2f08;"></div>
<div class="abs" style="left:1577.9px;top:596px;width:44.5px;height:44.5px;border-radius:9px;background:#000000;"></div>
<div class="abs" style="left:1223.0px;top:648.5px;width:44.5px;height:44.5px;border-radius:9px;background:#dc2334;"></div>
<div class="abs" style="left:1273.7px;top:648.5px;width:44.5px;height:44.5px;border-radius:9px;background:#f08912;"></div>
<div class="abs" style="left:1324.4px;top:648.5px;width:44.5px;height:44.5px;border-radius:9px;background:#f9f50c;"></div>
<div class="abs" style="left:1375.1px;top:648.5px;width:44.5px;height:44.5px;border-radius:9px;background:#48bf4e;"></div>
<div class="abs" style="left:1425.8px;top:648.5px;width:44.5px;height:44.5px;border-radius:9px;background:#1e66c1;"></div>
<div class="abs" style="left:1476.5px;top:648.5px;width:44.5px;height:44.5px;border-radius:9px;background:#8a0cbb;"></div>
<div class="abs" style="left:1527.2px;top:648.5px;width:44.5px;height:44.5px;border-radius:9px;background:#8f4c0c;"></div>
<div class="abs" style="left:1577.9px;top:648.5px;width:44.5px;height:44.5px;border-radius:9px;background:#777777;"></div>
<div class="abs" style="left:1223.0px;top:700.5px;width:44.5px;height:44.5px;border-radius:9px;background:#eb6f7e;"></div>
<div class="abs" style="left:1273.7px;top:700.5px;width:44.5px;height:44.5px;border-radius:9px;background:#f7c57e;"></div>
<div class="abs" style="left:1324.4px;top:700.5px;width:44.5px;height:44.5px;border-radius:9px;background:#fbfb06;"></div>
<div class="abs" style="left:1375.1px;top:700.5px;width:44.5px;height:44.5px;border-radius:9px;background:#85d985;"></div>
<div class="abs" style="left:1425.8px;top:700.5px;width:44.5px;height:44.5px;border-radius:9px;background:#6ab6f2;"></div>
<div class="abs" style="left:1476.5px;top:700.5px;width:44.5px;height:44.5px;border-radius:9px;background:#c982d8;"></div>
<div class="abs" style="left:1527.2px;top:700.5px;width:44.5px;height:44.5px;border-radius:9px;background:#c9a78a;"></div>
<div class="abs" style="left:1577.9px;top:700.5px;width:44.5px;height:44.5px;border-radius:9px;background:#bababa;"></div>
<div class="abs" style="left:1223.0px;top:754px;width:44.5px;height:44.5px;border-radius:9px;background:#f7c1d1;"></div>
<div class="abs" style="left:1273.7px;top:754px;width:44.5px;height:44.5px;border-radius:9px;background:#fbdeb2;"></div>
<div class="abs" style="left:1324.4px;top:754px;width:44.5px;height:44.5px;border-radius:9px;background:#fbf98a;"></div>
<div class="abs" style="left:1375.1px;top:754px;width:44.5px;height:44.5px;border-radius:9px;background:#c6e6c5;"></div>
<div class="abs" style="left:1425.8px;top:754px;width:44.5px;height:44.5px;border-radius:9px;background:#bdd9f6;"></div>
<div class="abs" style="left:1476.5px;top:754px;width:44.5px;height:44.5px;border-radius:9px;background:#e5c3ef;"></div>
<div class="abs" style="left:1527.2px;top:754px;width:44.5px;height:44.5px;border-radius:9px;background:#ead8c7;"></div>
<div class="abs" style="left:1577.9px;top:754px;width:44.5px;height:44.5px;border-radius:9px;background:#e3e3e3;"></div>
<div class="abs" style="left:1223.0px;top:807px;width:44.5px;height:44.5px;border-radius:9px;background:#fbe5ee;"></div>
<div class="abs" style="left:1273.7px;top:807px;width:44.5px;height:44.5px;border-radius:9px;background:#fdf1e3;"></div>
<div class="abs" style="left:1324.4px;top:807px;width:44.5px;height:44.5px;border-radius:9px;background:#fefde9;"></div>
<div class="abs" style="left:1375.1px;top:807px;width:44.5px;height:44.5px;border-radius:9px;background:#e9f4ea;"></div>
<div class="abs" style="left:1425.8px;top:807px;width:44.5px;height:44.5px;border-radius:9px;background:#e6f2fb;"></div>
<div class="abs" style="left:1476.5px;top:807px;width:44.5px;height:44.5px;border-radius:9px;background:#f3e2f4;"></div>
<div class="abs" style="left:1527.2px;top:807px;width:44.5px;height:44.5px;border-radius:9px;background:#f1e5de;"></div>
<div class="abs" style="left:1577.9px;top:807px;width:44.5px;height:44.5px;border-radius:9px;background:#ffffff;border:1px solid #ececf0;"></div>

  <svg class="abs" style="left:1485px;top:766px" width="28" height="20" viewBox="0 0 28 20"><path d="M2 9 L9.5 17 L25.5 2" fill="none" stroke="#3d2b4d" stroke-width="2.4"/></svg>
  <svg class="abs" style="left:1339px;top:673px" width="22" height="32" viewBox="0 0 22 32"><path d="M2 2 V24 L7.5 19 L11.5 28 L15 26.5 L11 18 H18 Z" fill="#fff" stroke="#222" stroke-width="1.8" stroke-linejoin="round"/></svg>
</div>
<div class="abs" style="left:549.5px;top:122px;width:1.5px;height:955px;background:#e2e2e9"></div>
<div id="bottomline"></div>
</body></html>
